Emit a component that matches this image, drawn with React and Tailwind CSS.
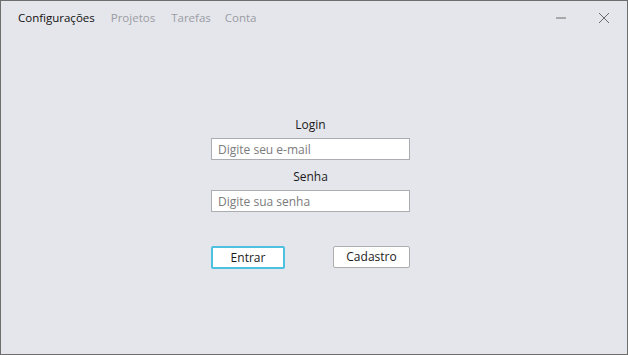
import React from "react";

function App() {
  return (
    <div
      className="w-[628px] h-[355px] bg-[#e5e6eb] border border-[#6e6e6e] flex flex-col text-[12px] text-[#1a1a1a]"
      style={{ fontFamily: '"Open Sans", "Noto Sans", sans-serif' }}
    >
      {/* barra superior */}
      <div className="flex items-center h-[34px] pl-[17px] pr-[17px]">
        <div className="flex gap-[16px] text-[11.5px]">
          <span className="text-[#111]">Configurações</span>
          <span className="text-[#9a9ca3]">Projetos</span>
          <span className="text-[#9a9ca3] -mr-[2px]">Tarefas</span>
          <span className="text-[#9a9ca3]">Conta</span>
        </div>
        <div className="ml-auto flex items-center gap-[31px]">
          <svg width="12" height="12" viewBox="0 0 12 12">
            <line x1="1" y1="6" x2="11" y2="6" stroke="#6b6b6b" strokeWidth="1" />
          </svg>
          <svg width="12" height="12" viewBox="0 0 12 12">
            <line x1="1" y1="1" x2="11" y2="11" stroke="#6b6b6b" strokeWidth="1" />
            <line x1="11" y1="1" x2="1" y2="11" stroke="#6b6b6b" strokeWidth="1" />
          </svg>
        </div>
      </div>

      {/* formulario */}
      <div className="flex flex-col items-center mt-[81px] pr-[7px]">
        <div className="w-[199px] flex flex-col">
          <label className="text-center h-[17px] leading-[17px]">Login</label>
          <input
            className="mt-[5px] h-[22px] bg-white border border-[#abadb3] px-[6px] text-[12px] outline-none placeholder:text-[#7b7b7b]"
            placeholder="Digite seu e-mail"
          />
          <label className="text-center mt-[8px] h-[17px] leading-[17px]">Senha</label>
          <input
            className="mt-[5px] h-[22px] bg-white border border-[#abadb3] px-[6px] text-[12px] outline-none placeholder:text-[#7b7b7b]"
            placeholder="Digite sua senha"
          />
          <div className="flex justify-between mt-[34px]">
            <button className="w-[74px] h-[23px] bg-white border-2 border-[#4fc1e0] rounded-[2px] text-[12px]">
              Entrar
            </button>
            <button className="w-[77px] h-[22px] bg-white border border-[#adadad] rounded-[2px] text-[12px]">
              Cadastro
            </button>
          </div>
        </div>
      </div>
    </div>
  );
}

export default App;
